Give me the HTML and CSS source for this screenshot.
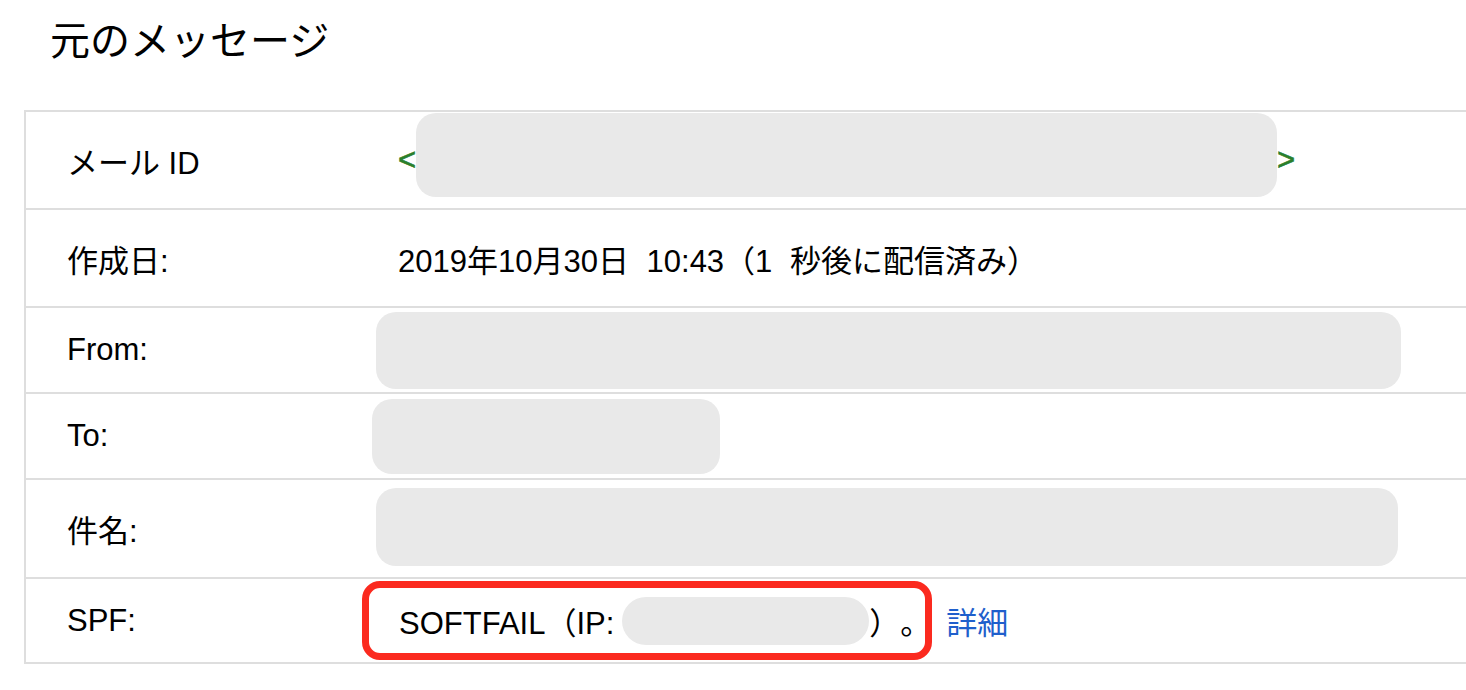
FILE: index.html
```html
<!DOCTYPE html>
<html lang="ja">

<head>
    <meta charset="UTF-8">
    <meta name="viewport" content="width=device-width, initial-scale=1.0">
    <title>元のメッセージ</title>

    <link rel="stylesheet" href="styles.css">
</head>

<body>

    <h1 class="page-title">元のメッセージ</h1>

    <div class="msg-table">
        <div class="msg-row row-id">
            <div class="msg-label">メール ID</div>
            <div class="msg-value">
                <span class="angle">&lt;</span><span class="redact redact-id"></span><span class="angle">&gt;</span>
            </div>
        </div>
        <div class="msg-row row-date">
            <div class="msg-label">作成日:</div>
            <div class="msg-value date-value">2019年10月30日 10:43（1 秒後に配信済み）</div>
        </div>
        <div class="msg-row row-from">
            <div class="msg-label">From:</div>
            <div class="msg-value">
                <span class="redact redact-from"></span>
            </div>
        </div>
        <div class="msg-row row-to">
            <div class="msg-label">To:</div>
            <div class="msg-value">
                <span class="redact redact-to"></span>
            </div>
        </div>
        <div class="msg-row row-subject">
            <div class="msg-label">件名:</div>
            <div class="msg-value">
                <span class="redact redact-subject"></span>
            </div>
        </div>
        <div class="msg-row row-spf">
            <div class="msg-label">SPF:</div>
            <div class="msg-value">
                <span class="spf-box">SOFTFAIL（IP:<span class="redact redact-ip"></span><span class="spf-end">）。</span></span>
                <a href="#" class="detail-link">詳細</a>
            </div>
        </div>
    </div>

</body>

</html>
```

FILE: styles.css
```css
body {
    margin: 0;
    overflow: hidden;
    background-color: #fff;
    color: #000;
    font-family: "Liberation Sans", Arial, "Noto Sans CJK JP", sans-serif;
    /* 全角の括弧や句点を詰めない */
    text-spacing-trim: space-all;
}

.page-title {
    margin: 17px 0 45px 50px;
    font-size: 40px;
    line-height: 48px;
    font-weight: normal;
}

.msg-table {
    margin-left: 24px;
    width: 1480px;
    border-left: 2px solid #dedede;
    border-bottom: 2px solid #dedede;
    font-size: 31px;
}

.msg-row {
    display: flex;
    align-items: center;
    border-top: 2px solid #dedede;
}

/* 行の高さ（上の罫線を除く） */
.row-id { height: 96px; }
.row-date { height: 96px; }
.row-from { height: 84px; }
.row-to { height: 84px; }
.row-subject { height: 97px; }
.row-spf { height: 83px; }

.msg-label {
    flex: none;
    width: 372px;
    padding-left: 41px;
    box-sizing: border-box;
}

.msg-value {
    display: flex;
    align-items: center;
    white-space: nowrap;
}

.date-value {
    /* 和文の間の半角スペースが広め */
    word-spacing: 9px;
}

.angle {
    color: #2a7f2c;
    -webkit-text-stroke: 0.6px #2a7f2c;
}

/* 伏せ字 */
.redact {
    display: inline-block;
    background-color: #e9e9e9;
    border-radius: 20px;
}

.redact-id {
    width: 861px;
    height: 84px;
    margin-top: -10px;
}

.redact-from {
    width: 1025px;
    height: 77px;
    margin-left: -22px;
}

.redact-to {
    width: 348px;
    height: 75px;
    margin-left: -26px;
}

.redact-subject {
    width: 1022px;
    height: 78px;
    margin-left: -22px;
    margin-top: -4px;
}

.redact-ip {
    width: 247px;
    height: 48px;
    margin-left: 8px;
    border-radius: 24px;
}

.spf-box {
    display: inline-flex;
    align-items: center;
    height: 79px;
    box-sizing: border-box;
    margin-left: -36px;
    padding-left: 30px;
    border: 7px solid #fb2a1f;
    border-radius: 18px;
}

.spf-end {
    margin-right: -6px;
}

.detail-link {
    margin-left: 14px;
    color: #1f5fcc;
    text-decoration: none;
}
```
